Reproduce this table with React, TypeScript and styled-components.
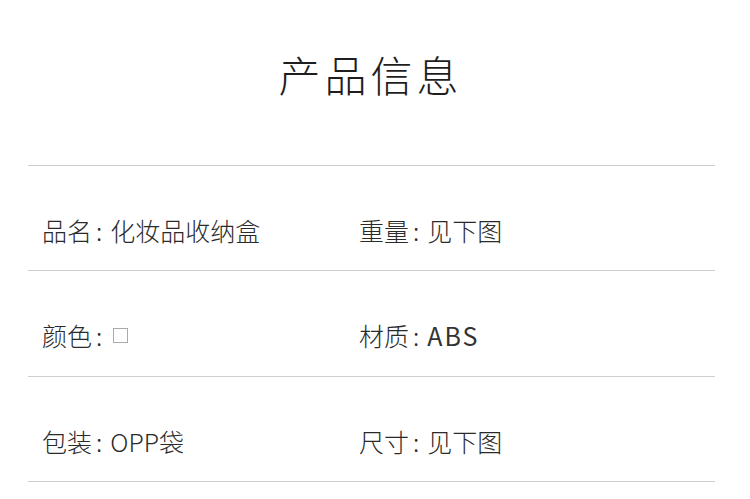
import React from 'react';
import styled, { createGlobalStyle } from 'styled-components';

const GlobalStyle = createGlobalStyle`
  html, body {
    margin: 0;
    padding: 0;
    background: #ffffff;
  }
  body {
    font-family: "Noto Sans CJK SC", "Noto Sans", sans-serif;
    color: #333;
  }
`;

// Styled Components
const Page = styled.div`
  width: 687px;
  margin-left: 28px;
`;

const Header = styled.div`
  padding: 54px 0 71px;
  border-bottom: 1px solid #cfcfcf;
  display: flex;
  justify-content: center;
`;

const Title = styled.h1`
  margin: 0;
  padding-right: 2px;
  font-size: 42px;
  line-height: 40px;
  font-weight: 300;
  letter-spacing: 4px;
  color: #1e1e1e;
`;

const Row = styled.div`
  display: grid;
  grid-template-columns: 317px 1fr;
  align-content: start;
  height: 105px;
  box-sizing: border-box;
  padding: 51px 0 0 14px;
  border-bottom: 1px solid #cfcfcf;

  &:nth-child(3) {
    height: 106px;
  }
`;

const Cell = styled.div`
  display: flex;
  align-items: center;
  font-size: 25px;
  line-height: 26px;
  font-weight: 300;
  color: #2a2a2a;
  white-space: nowrap;
`;

const Colon = styled.span`
  margin: 0 8px 0 4px;
`;

const Latin = styled.span`
  letter-spacing: 2px;
  font-weight: 400;
  color: #333;
`;

const Swatch = styled.span`
  display: inline-block;
  width: 13px;
  height: 13px;
  border: 1px solid #aaa;
  margin-left: 3px;
`;

type Spec = { label: string; value: React.ReactNode };

function getRows(): [Spec, Spec][] {
  return [
    [
      { label: '品名', value: '化妆品收纳盒' },
      { label: '重量', value: '见下图' },
    ],
    [
      { label: '颜色', value: <Swatch /> },
      { label: '材质', value: <Latin>ABS</Latin> },
    ],
    [
      { label: '包装', value: 'OPP袋' },
      { label: '尺寸', value: '见下图' },
    ],
  ];
}

export default function App() {
  const rows = getRows();
  return (
    <>
      <GlobalStyle />
      <Page>
        <Header>
          <Title>产品信息</Title>
        </Header>
        {rows.map((pair, i) => (
          <Row key={i}>
            {pair.map((spec) => (
              <Cell key={spec.label}>
                {spec.label}
                <Colon>:</Colon>
                {spec.value}
              </Cell>
            ))}
          </Row>
        ))}
      </Page>
    </>
  );
}
